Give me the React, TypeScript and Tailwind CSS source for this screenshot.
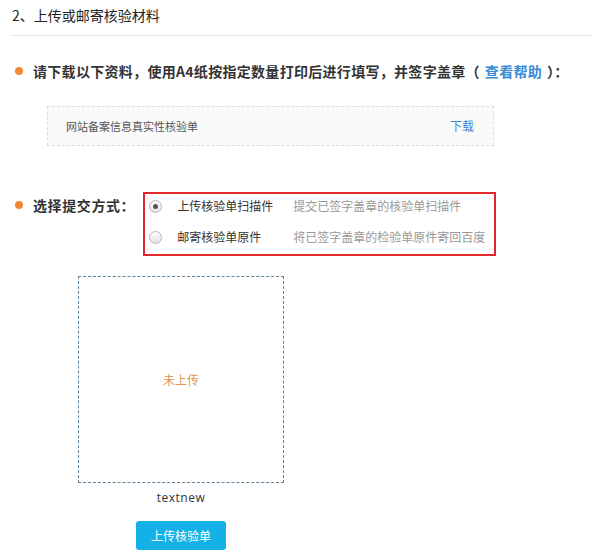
import { useState } from "react";

const font = {
  fontFamily: '"Microsoft YaHei", "Noto Sans CJK SC", "Liberation Sans", sans-serif',
};

const options = [
  { key: "upload", label: "上传核验单扫描件", desc: "提交已签字盖章的核验单扫描件" },
  { key: "mail", label: "邮寄核验单原件", desc: "将已签字盖章的检验单原件寄回百度" },
];

export default function App() {
  const [mode, setMode] = useState("upload");

  return (
    <div className="w-[591px] h-[555px] bg-white overflow-hidden pl-[12px]" style={font}>
      {/* Section title */}
      <div className="h-[36px] pt-[5px] border-b border-[#e6e6e6]">
        <h2 className="text-[14px] leading-[20px] text-[#222]">2、上传或邮寄核验材料</h2>
      </div>

      {/* Download step */}
      <div className="flex items-center mt-[25px] h-[20px]">
        <span className="w-[8px] h-[8px] rounded-full bg-[#f0883a] ml-[3px]" />
        <p className="ml-[10px] text-[14px] font-bold text-[#333] leading-[20px] whitespace-nowrap tracking-[0.3px]">
          请下载以下资料，使用A4纸按指定数量打印后进行填写，并签字盖章（
          <a href="#" className="text-[#3a8ad6] mx-[5px]">
            查看帮助
          </a>
          ）：
        </p>
      </div>

      <div className="ml-[35px] mt-[25px] w-[447px] h-[40px] border border-dashed border-[#dcdcdc] bg-[#fafafa] flex items-center justify-between pl-[18px] pr-[19px]">
        <span className="text-[11px] text-[#555]">网站备案信息真实性核验单</span>
        <a href="#" className="text-[12px] text-[#3a8ad6]">
          下载
        </a>
      </div>

      {/* Submit method */}
      <div className="flex items-start mt-[46px]">
        <div className="flex items-center h-[26px]">
          <span className="w-[8px] h-[8px] rounded-full bg-[#f0883a] ml-[3px]" />
          <span className="ml-[10px] text-[14px] font-bold text-[#333] whitespace-nowrap tracking-[0.6px]">
            选择提交方式：
          </span>
        </div>
        <div className="ml-[8px] w-[353px] h-[64px] border-2 border-[#e3262b] pl-[4px] flex flex-col gap-[7px]">
          {options.map((o) => (
            <label
              key={o.key}
              className="flex items-center h-[24px] cursor-pointer"
              onClick={() => setMode(o.key)}
            >
              <span className="w-[13px] h-[13px] rounded-full border border-[#b5b5b5] bg-gradient-to-b from-[#fdfdfd] to-[#e4e4e4] flex items-center justify-center">
                {mode === o.key && <span className="w-[5px] h-[5px] rounded-full bg-[#555]" />}
              </span>
              <span className="ml-[15px] w-[116px] text-[12px] text-[#333]">{o.label}</span>
              <span className="text-[12px] text-[#999]">{o.desc}</span>
            </label>
          ))}
        </div>
      </div>

      {/* Upload preview */}
      <div className="ml-[66px] mt-[20px] w-[206px] flex flex-col items-center">
        <div className="w-[206px] h-[207px] border border-dashed border-[#5f8199] flex items-center justify-center">
          <span className="text-[12px] text-[#e0935b]">未上传</span>
        </div>
        <span
          className="mt-[6px] text-[12px] text-[#333] tracking-[0.5px]"
          style={{ fontFamily: '"Open Sans", "Liberation Sans", sans-serif' }}
        >
          textnew
        </span>
        <button className="mt-[14px] w-[90px] h-[29px] rounded-[3px] bg-[#14b1e7] text-white text-[12px]">
          上传核验单
        </button>
      </div>
    </div>
  );
}
